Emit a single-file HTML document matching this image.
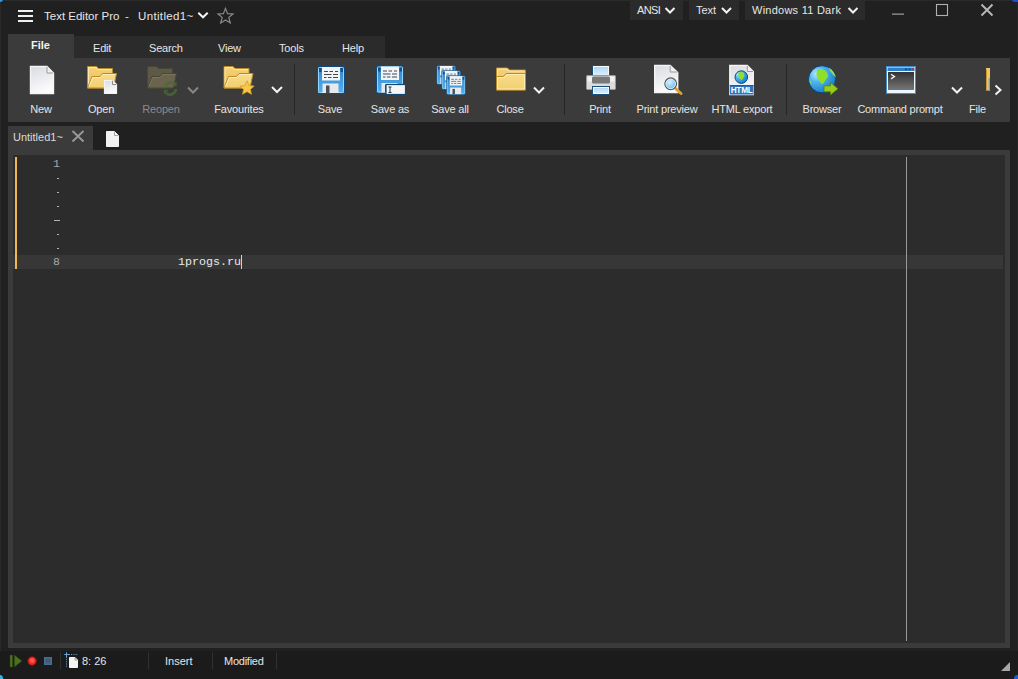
<!DOCTYPE html>
<html><head><meta charset="utf-8">
<style>
*{margin:0;padding:0;box-sizing:border-box}
html,body{width:1018px;height:679px;overflow:hidden;background:#202020;font-family:"Liberation Sans",sans-serif;color:#e6e6e6}
.a{position:absolute}
.t{position:absolute;white-space:nowrap;font-size:11px;line-height:12px}
.lbl{position:absolute;white-space:nowrap;font-size:11px;line-height:12px;top:103px;text-align:center;color:#e4e4e4;letter-spacing:-0.2px}
svg{position:absolute;overflow:visible}
</style></head><body>
<div class="a" style="left:0;top:0;width:1018px;height:1px;background:#2a2a2a"></div>
<div class="a" style="left:0;top:0;width:1px;height:651px;background:#2a2a2a"></div>
<div class="a" style="left:1017px;top:0;width:1px;height:651px;background:#262626"></div>
<!-- title bar -->
<div id="title">
  <div class="a" style="left:18px;top:10px;width:15px;height:2px;background:#f0f0f0"></div>
  <div class="a" style="left:18px;top:15px;width:15px;height:2px;background:#f0f0f0"></div>
  <div class="a" style="left:18px;top:20px;width:15px;height:2px;background:#f0f0f0"></div>
  <div class="t" style="left:44px;top:10px;font-size:11.5px">Text Editor Pro</div>
  <div class="t" style="left:125px;top:10px;font-size:11.5px">-</div>
  <div class="t" style="left:138px;top:10px;font-size:11.5px;letter-spacing:0.35px">Untitled1~</div>
</div>

<!-- ribbon tabs -->
<div class="a" style="left:8px;top:36px;width:377px;height:22px;background:#2b2b2b"></div>
<div class="a" style="left:8px;top:34px;width:66px;height:24px;background:#3b3b3b"></div>
<div class="t" style="left:31px;top:39px;font-weight:bold;color:#f2f2f2">File</div>
<div class="t" style="left:93px;top:42px;letter-spacing:-0.2px">Edit</div>
<div class="t" style="left:149px;top:42px;letter-spacing:-0.2px">Search</div>
<div class="t" style="left:218px;top:42px;letter-spacing:-0.2px">View</div>
<div class="t" style="left:279px;top:42px;letter-spacing:-0.2px">Tools</div>
<div class="t" style="left:342px;top:42px;letter-spacing:-0.2px">Help</div>

<!-- title combo boxes -->
<div class="a" style="left:630px;top:0;width:53px;height:20px;background:#2b2b2b"></div>
<div class="a" style="left:689px;top:0;width:50px;height:20px;background:#2b2b2b"></div>
<div class="a" style="left:745px;top:0;width:120px;height:20px;background:#2b2b2b"></div>
<div class="t" style="left:637px;top:4px;letter-spacing:-0.6px">ANSI</div>
<div class="t" style="left:696px;top:4px">Text</div>
<div class="t" style="left:752px;top:4px;letter-spacing:0.25px">Windows 11 Dark</div>

<!-- ribbon -->
<div class="a" style="left:8px;top:58px;width:1002px;height:64px;background:#3b3b3b"></div>
<div class="lbl" style="left:20px;width:42px">New</div>
<div class="lbl" style="left:80px;width:42px">Open</div>
<div class="lbl" style="left:131px;width:60px;color:#8a8a8a">Reopen</div>
<div class="lbl" style="left:199px;width:80px">Favourites</div>
<div class="lbl" style="left:300px;width:60px">Save</div>
<div class="lbl" style="left:360px;width:60px">Save as</div>
<div class="lbl" style="left:420px;width:60px">Save all</div>
<div class="lbl" style="left:480px;width:60px">Close</div>
<div class="lbl" style="left:570px;width:60px">Print</div>
<div class="lbl" style="left:627px;width:80px">Print preview</div>
<div class="lbl" style="left:702px;width:80px">HTML export</div>
<div class="lbl" style="left:792px;width:60px">Browser</div>
<div class="lbl" style="left:850px;width:100px">Command prompt</div>
<div class="lbl" style="left:969px;text-align:left">File</div>

<!-- doc tabs -->
<div class="a" style="left:8px;top:126px;width:85px;height:24px;background:#3b3b3b"></div>
<div class="t" style="left:13px;top:131px;color:#dcdcdc">Untitled1~</div>

<!-- editor -->
<div class="a" style="left:8px;top:150px;width:1002px;height:498px;background:#3b3b3b"></div>
<div class="a" style="left:13px;top:155px;width:992px;height:488px;background:#2c2c2c"></div>
<div class="a" style="left:13px;top:255px;width:990px;height:14px;background:#373737"></div>
<div class="a" style="left:15px;top:157px;width:2px;height:112px;background:#f0b850"></div>
<div class="a" style="left:906px;top:157px;width:1px;height:484px;background:#9a9a9a"></div>
<div class="a" style="left:20px;top:157px;width:40px;font:11.5px/14px 'Liberation Mono',monospace;color:#a8a8a8;text-align:right">1</div>
<div class="a" style="left:20px;top:255px;width:40px;font:11.5px/14px 'Liberation Mono',monospace;color:#a8a8a8;text-align:right">8</div>
<div class="a" style="left:56.8px;top:178px;width:2.5px;height:1px;background:#b4b4b4"></div>
<div class="a" style="left:56.8px;top:192px;width:2.5px;height:1px;background:#b4b4b4"></div>
<div class="a" style="left:56.8px;top:206px;width:2.5px;height:1px;background:#b4b4b4"></div>
<div class="a" style="left:54px;top:220px;width:5.5px;height:1px;background:#b4b4b4"></div>
<div class="a" style="left:56.8px;top:234px;width:2.5px;height:1px;background:#b4b4b4"></div>
<div class="a" style="left:56.8px;top:248px;width:2.5px;height:1px;background:#b4b4b4"></div>
<div class="a" style="left:178px;top:255px;font:11.67px/14px 'Liberation Mono',monospace;color:#e8e8e8;white-space:pre">1progs.ru</div>
<div class="a" style="left:241px;top:255px;width:1px;height:14px;background:#d0d0d0"></div>

<!-- status bar -->
<div class="a" style="left:0;top:651px;width:1018px;height:28px;background:#1b1b1b"></div>
<div class="t" style="left:82px;top:655px">8: 26</div>
<div class="t" style="left:165px;top:655px">Insert</div>
<div class="t" style="left:224px;top:655px;letter-spacing:-0.25px">Modified</div>

<svg class="a" style="left:0;top:0" width="1018" height="679" viewBox="0 0 1018 679">
<defs>
  <linearGradient id="gPage" x1="0" y1="0" x2="0.3" y2="1">
    <stop offset="0" stop-color="#d9dbe0"/><stop offset="1" stop-color="#fbfbfc"/>
  </linearGradient>
  <linearGradient id="gFolderBack" x1="0" y1="0" x2="0" y2="1">
    <stop offset="0" stop-color="#f6d47c"/><stop offset="1" stop-color="#e9b94e"/>
  </linearGradient>
  <linearGradient id="gFolderFront" x1="0" y1="0" x2="0" y2="1">
    <stop offset="0" stop-color="#f8dc8c"/><stop offset="1" stop-color="#f3cf6e"/>
  </linearGradient>
  <linearGradient id="gFloppy" x1="0" y1="0" x2="0" y2="1">
    <stop offset="0" stop-color="#2f82c8"/><stop offset="1" stop-color="#56b2ee"/>
  </linearGradient>
  <linearGradient id="gPaperBlue" x1="0" y1="0" x2="0" y2="1">
    <stop offset="0" stop-color="#a9d4f4"/><stop offset="1" stop-color="#e4f2fc"/>
  </linearGradient>
  <linearGradient id="gConsole" x1="0" y1="0" x2="0" y2="1">
    <stop offset="0" stop-color="#333"/><stop offset="1" stop-color="#767676"/>
  </linearGradient>
  <radialGradient id="gGlobe" cx="0.35" cy="0.3" r="0.8">
    <stop offset="0" stop-color="#9fe0ff"/><stop offset="0.5" stop-color="#2f9ae0"/><stop offset="1" stop-color="#1463b0"/>
  </radialGradient>
  <radialGradient id="gGlobe2" cx="0.3" cy="0.3" r="0.85">
    <stop offset="0" stop-color="#b8ecff"/><stop offset="0.35" stop-color="#4fb4ec"/><stop offset="0.8" stop-color="#1f86d0"/><stop offset="1" stop-color="#1260a8"/>
  </radialGradient>
  <radialGradient id="gLens" cx="0.4" cy="0.35" r="0.7">
    <stop offset="0" stop-color="#d8f2ff"/><stop offset="1" stop-color="#5bb5ec"/>
  </radialGradient>
  <g id="folderOpen">
    <path d="M0.5,22 V0.5 H9.5 L11.5,2.5 H25.5 V22 Z" fill="url(#gFolderBack)" stroke="#b98a2a" stroke-width="1"/>
    <path d="M1.5,21 V1.5 H9 L11,3.5 H24.5" fill="none" stroke="#fbe7b0" stroke-width="1"/>
    <path d="M0.5,22 L5,10.5 H13 L15.5,7.5 H29.5 L26.5,22 Z" fill="url(#gFolderFront)" stroke="#b98a2a" stroke-width="1"/>
    <path d="M2,20.5 L5.8,11.5 H13.5 L16,8.5 H28" fill="none" stroke="#fdebb8" stroke-width="1"/>
  </g>
  <g id="page">
    <path d="M0.5,0.5 H17 L23.5,7 V27.5 H0.5 Z" fill="url(#gPage)" stroke="#f4f4f4" stroke-width="1.4"/>
    <path d="M17,0.8 V7 H23.2" fill="#f0f0f0" stroke="#9a9a9a" stroke-width="1"/>
  </g>
  <g id="smallpage">
    <path d="M0.5,0.5 H8.5 L12.5,4.5 V13.5 H0.5 Z" fill="url(#gPage)" stroke="#f4f4f4" stroke-width="1.2"/>
    <path d="M8.5,0.8 V4.5 H12.2" fill="#f0f0f0" stroke="#8a8a8a" stroke-width="1"/>
  </g>
  <g id="floppy">
    <rect x="0.5" y="0.5" width="27" height="27" rx="1.5" fill="url(#gFloppy)" stroke="#0f4a80" stroke-width="1"/>
    <rect x="1.5" y="1.5" width="25" height="25" rx="1" fill="none" stroke="#8fd6ff" stroke-width="1"/>
    <rect x="2" y="2" width="2.5" height="4" fill="#174f8a"/>
    <rect x="23.5" y="2" width="2.5" height="4" fill="#174f8a"/>
    <rect x="5" y="1" width="18" height="13.5" fill="#f2f5f8"/>
    <path d="M7,5.5 H11 M12.5,5.5 H16 M18,5.5 H21 M7,8.5 H14.5 M16,8.5 H21 M7,11.5 H9.5 M11,11.5 H14.5 M16,11.5 H21" stroke="#404850" stroke-width="1"/>
    <rect x="5.5" y="17.5" width="16" height="9.5" fill="#e6eaee"/>
    <rect x="9" y="19.5" width="3.5" height="7.5" fill="#4a4e52"/>
  </g>
  <g id="chev"><polyline points="0,0 5,5 10,0" fill="none" stroke="#f2f2f2" stroke-width="2"/></g>
</defs>

<!-- title chevron and star -->
<polyline points="198.3,12.8 203,17.3 207.7,12.8" fill="none" stroke="#f4f4f4" stroke-width="2"/>
<path d="M225.5,8.4 L227.6,13.6 L233,13.9 L228.8,17.4 L230.3,23 L225.5,19.9 L220.7,23 L222.2,17.4 L218,13.9 L223.4,13.6 Z" fill="none" stroke="#8a8a8a" stroke-width="1.2" stroke-linejoin="miter"/>

<polyline points="665.5,8 670,12.5 674.5,8" fill="none" stroke="#f2f2f2" stroke-width="2"/>
<polyline points="722,8 726.5,12.5 731,8" fill="none" stroke="#f2f2f2" stroke-width="2"/>
<polyline points="848.5,8 853,12.5 857.5,8" fill="none" stroke="#f2f2f2" stroke-width="2"/>
<!-- window controls -->
<rect x="892" y="13.6" width="12" height="1" fill="#b8b8b8"/>
<rect x="936.5" y="4.5" width="11" height="11" fill="none" stroke="#b0b0b0" stroke-width="1.1"/>
<path d="M981.5,4.5 L992.5,15.5 M992.5,4.5 L981.5,15.5" stroke="#b8b8b8" stroke-width="1.9"/>

<!-- ribbon icons -->
<use href="#page" x="30" y="66"/>
<use href="#folderOpen" x="87" y="66"/>
<use href="#smallpage" x="104" y="80"/>

<g transform="translate(147,66)">
    <path d="M0.5,22 V0.5 H9.5 L11.5,2.5 H25.5 V22 Z" fill="#5e5946" stroke="#4a4636" stroke-width="1"/>
    <path d="M0.5,22 L5,10.5 H13 L15.5,7.5 H29.5 L26.5,22 Z" fill="#6a644f" stroke="#4a4636" stroke-width="1"/>
    <path d="M2,20.5 L5.8,11.5 H13.5 L16,8.5 H28" fill="none" stroke="#7a745e" stroke-width="1"/>
</g>
<g opacity="0.75">
<path d="M165,88 a6,6 0 0 1 10,-4" fill="none" stroke="#4a6a34" stroke-width="2.8"/>
<path d="M176.5,81.5 L176.8,86.5 L172,86 Z" fill="#4a6a34"/>
<path d="M176,89 a6,6 0 0 1 -10,4" fill="none" stroke="#4a6a34" stroke-width="2.8"/>
<path d="M164,94.5 L163.8,89.5 L168.5,90 Z" fill="#4a6a34"/>
</g>
<g opacity="0.42"><use href="#chev" x="188" y="87.5"/></g>

<use href="#folderOpen" x="223.5" y="66"/>
<path d="M247,80.8 L249.2,85.6 L254.2,86.1 L250.4,89.4 L251.5,94.3 L247,91.7 L242.5,94.3 L243.6,89.4 L239.8,86.1 L244.8,85.6 Z" fill="#f6c84a" stroke="#d99a20" stroke-width="0.8"/>
<use href="#chev" x="272" y="87"/>

<rect x="294" y="64" width="1" height="51" fill="#262626"/>

<use href="#floppy" x="317" y="66"/>
<use href="#floppy" x="376" y="65.5"/>
<rect x="386" y="84.5" width="19.5" height="10" fill="#f4f6f8" stroke="#14476f" stroke-width="1.2"/>
<path d="M388.5,87 H391.5 M390,87 V92.5 M388.5,92.5 H391.5" stroke="#333" stroke-width="1"/>

<g transform="translate(436.5,65.3) scale(0.69)"><use href="#floppy"/></g>
<g transform="translate(441.5,70.3) scale(0.69)"><use href="#floppy"/></g>
<g transform="translate(446.3,75.5) scale(0.69)"><use href="#floppy"/></g>

<g>
  <path d="M496.5,90 V68 H507.5 L509.5,70 H525.5 V90 Z" fill="url(#gFolderBack)" stroke="#b98a2a" stroke-width="1"/>
  <path d="M497.5,76 V69 H507 L509,71 H524.5" fill="none" stroke="#fbe7b0" stroke-width="1"/>
  <path d="M496.5,90 V76.5 H503.5 L506,73.5 H525.5 V90 Z" fill="url(#gFolderFront)" stroke="#b98a2a" stroke-width="1"/>
  <path d="M497.5,89 V77.5 H504 L506.5,74.5 H524.5 V89 H497.5" fill="none" stroke="#fdebb8" stroke-width="1"/>
</g>
<use href="#chev" x="534" y="87.5"/>

<rect x="564" y="64" width="1" height="51" fill="#262626"/>

<!-- printer -->
<rect x="592.5" y="65.5" width="17" height="11" fill="url(#gPaperBlue)" stroke="#1a4f7a" stroke-width="1"/>
<rect x="593.5" y="66.5" width="15" height="9" fill="none" stroke="#f4fbff" stroke-width="1"/>
<rect x="586.5" y="75.5" width="29" height="14" rx="1" fill="#dcdcdc" stroke="#9a9a9a" stroke-width="1"/>
<rect x="587.5" y="76.5" width="27" height="5" fill="#f2f2f2"/>
<rect x="592" y="76.5" width="18" height="7" rx="1.5" fill="#787878"/>
<rect x="592.5" y="86.5" width="17" height="8" fill="url(#gPaperBlue)" stroke="#1a4f7a" stroke-width="1"/>
<rect x="593.5" y="87.5" width="15" height="6" fill="none" stroke="#f4fbff" stroke-width="1"/>

<!-- print preview -->
<g transform="translate(654.2,65)"><path d="M0.5,0.5 H16 L23.5,7.5 V27.5 H0.5 Z" fill="url(#gPage)" stroke="#f4f4f4" stroke-width="1.4"/><path d="M16,0.8 V7 H23.2" fill="#f0f0f0" stroke="#9a9a9a" stroke-width="1"/></g>
<path d="M675.5,88.5 L681,93.5" stroke="#e0a030" stroke-width="3" stroke-linecap="round"/>
<circle cx="670.7" cy="83.8" r="5.8" fill="url(#gLens)" stroke="#5a5a5a" stroke-width="1.3"/>
<circle cx="670.7" cy="83.8" r="4.8" fill="none" stroke="#e8f6ff" stroke-width="0.8"/>

<!-- html export -->
<g transform="translate(729.3,65)"><path d="M0.5,0.5 H18 L24,6.5 V29.5 H0.5 Z" fill="url(#gPage)" stroke="#f4f4f4" stroke-width="1.4"/><path d="M18,0.8 V6.5 H23.7" fill="#f0f0f0" stroke="#9a9a9a" stroke-width="1"/></g>
<circle cx="741.3" cy="77.1" r="6.3" fill="url(#gGlobe2)" stroke="#0d4a86" stroke-width="1"/>
<path d="M739,72 Q742.5,71.3 744,73.5 Q745,76 743.5,77.5 Q742.5,80 741,80 Q739.5,78 738.5,76 Q737.5,73.5 739,72 Z" fill="#8ee02a"/>
<rect x="729.8" y="85" width="23.7" height="9.5" fill="#2a74c0"/>
<rect x="729.8" y="85" width="23.7" height="1" fill="#1a5aa0"/>
<text x="741.6" y="93.2" text-anchor="middle" font-family="Liberation Sans" font-weight="bold" font-size="8.2" fill="#ffffff" letter-spacing="-0.2">HTML</text>

<rect x="786" y="64" width="1" height="51" fill="#262626"/>
<!-- browser globe -->
<circle cx="822.1" cy="79.3" r="13.6" fill="url(#gGlobe2)" stroke="#0b3f78" stroke-width="1"/>
<path d="M817.5,69.5 Q822,68 825,70.5 Q828.5,73.5 828,77 Q826,79 824.5,81.5 Q823.5,84.5 821.5,84 Q819,81 817.5,78 Q815.5,74 817.5,69.5 Z" fill="#8ee02a"/>
<path d="M828.5,67.5 Q834,70.5 836,77.5 Q833,75 830.5,71.5 Z" fill="#9fe040"/>
<path d="M809.5,80 Q811.5,80.5 812,83.5 Q810.5,84 809.5,82 Z" fill="#8ee02a"/>
<path d="M824,85.8 H830.5 V82.5 L838,88.8 L830.5,95 V91.8 H824 Z" fill="#98cc1a" stroke="#4f8010" stroke-width="0.8"/>
<!-- command prompt -->
<rect x="886.5" y="66.5" width="29" height="27" fill="#eaf7ff" stroke="#3f8fd0" stroke-width="1"/>
<rect x="887.5" y="67.5" width="27" height="3.5" fill="#2f80c8"/>
<rect x="905" y="68.3" width="2" height="2" fill="#0e4f8a"/>
<rect x="908.5" y="68.3" width="2" height="2" fill="#0e4f8a"/>
<rect x="912" y="68.3" width="2" height="2" fill="#d02a2a"/>
<rect x="888" y="72" width="26" height="18" fill="url(#gConsole)"/>
<polyline points="891,74.3 894.5,76.6 891,78.9" fill="none" stroke="#f0f0f0" stroke-width="1.3"/>

<use href="#chev" x="952" y="87.5"/>

<!-- partial file icon -->
<rect x="986" y="68" width="4" height="22.5" fill="#f0c860"/>
<rect x="986" y="69.5" width="1" height="21" fill="#c49a30"/>
<rect x="988.5" y="78" width="1.5" height="13" fill="#8aa0c0"/>
<polyline points="995.5,85.5 1000.5,90 995.5,94.5" fill="none" stroke="#f2f2f2" stroke-width="2"/>

<!-- status bar icons -->
<rect x="10" y="655" width="2.6" height="12" fill="#4d7222" stroke="#2a4010" stroke-width="0.5"/>
<path d="M14.3,655 L22,661 L14.3,667 Z" fill="#4a7020" stroke="#2a4010" stroke-width="0.5"/>
<circle cx="32.1" cy="661" r="4.2" fill="#f02a2a" stroke="#a01010" stroke-width="0.8"/>
<circle cx="32.1" cy="660.5" r="2.2" fill="#ff5a4a"/>
<rect x="44" y="657" width="8" height="8" fill="#4b6c8c"/>
<rect x="45.5" y="658.5" width="5" height="5" fill="#3d5b78"/>
<rect x="60" y="652" width="1" height="17.5" fill="#303030"/>
<rect x="148" y="652" width="1" height="17.5" fill="#303030"/>
<rect x="212" y="652" width="1" height="17.5" fill="#303030"/>
<rect x="276" y="652" width="1" height="17.5" fill="#303030"/>
<path d="M64.5,654.5 H78 M66.5,652.5 V668" stroke="#6aa4dc" stroke-width="1" stroke-dasharray="1,1.2"/>
<path d="M64.5,654.5 H69 M66.5,652.5 V657" stroke="#6aa4dc" stroke-width="1"/>
<g transform="translate(69,657)"><path d="M0.5,0.5 H6 L8.5,3 V10.5 H0.5 Z" fill="#f4f4f4" stroke="#f4f4f4" stroke-width="1"/><path d="M6,0.8 V3 H8.2" fill="none" stroke="#8a8a8a" stroke-width="0.8"/></g>
<path d="M1001,671 L1010,662 V671 Z" fill="#a8a8a8"/>

<!-- doc tab close & new doc -->
<path d="M72.5,131 L83.5,141.5 M83.5,131 L72.5,141.5" stroke="#9a9a9a" stroke-width="1.8"/>
<g transform="translate(106,131)"><path d="M0.5,0.5 H8.5 L12.5,4.5 V15.5 H0.5 Z" fill="#f2f2f2" stroke="#f2f2f2" stroke-width="1"/><path d="M8.5,0.8 V4.5 H12.2" fill="none" stroke="#9a9a9a" stroke-width="0.9"/></g>
</svg>
<div class="a" style="left:-3px;top:-3px;width:6px;height:5px;border-radius:50%;background:#2a9ae8"></div>
<div class="a" style="left:-3px;top:675px;width:6px;height:7px;border-radius:50%;background:#30b0f0"></div>
<div class="a" style="left:1012px;top:-3px;width:9px;height:5px;border-radius:50%;background:#1b4fd8"></div>
<div class="a" style="left:1014px;top:675px;width:7px;height:7px;border-radius:50%;background:#1b5ad8"></div>
</body></html>
